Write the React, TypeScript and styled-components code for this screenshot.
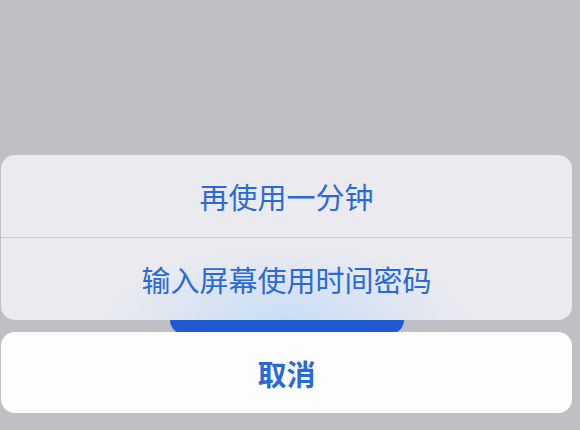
import React from "react";
import styled, { createGlobalStyle } from "styled-components";

//#region
const GlobalStyle = createGlobalStyle`
  html, body {
    margin: 0;
    padding: 0;
    background: #c0bfc4;
  }
  body {
    font-family: "Noto Sans CJK SC", "Noto Sans", sans-serif;
  }
`;

const Page = styled.div`
  position: relative;
  box-sizing: border-box;
  width: 580px;
  height: 430px;
  padding: 0 8px 17px 1px;
  display: flex;
  flex-direction: column;
  justify-content: flex-end;
  overflow: hidden;
`;

// the blue button of the screen under the sheet
const UnderButton = styled.div`
  position: absolute;
  left: 170px;
  top: 262px;
  width: 234px;
  height: 72px;
  border-radius: 14px;
  background: #1f5ad0;
`;

const Sheet = styled.div`
  position: relative;
  z-index: 1;
  display: flex;
  flex-direction: column;
  gap: 12px;
`;

const Group = styled.div`
  display: flex;
  flex-direction: column;
  border-radius: 14px;
  overflow: hidden;
  background:
    radial-gradient(ellipse 190px 75px at 50% 100%, rgba(198, 220, 246, 0.9), rgba(206, 224, 246, 0) 100%),
    #ebebef;
`;

const Action = styled.div<{ $divider?: boolean }>`
  height: 82px;
  display: flex;
  align-items: center;
  justify-content: center;
  font-size: 29px;
  color: #2a6ad6;
  border-bottom: ${(p) => (p.$divider ? "1px solid #c9c9ce" : "none")};
`;

const Cancel = styled.div`
  height: 81px;
  border-radius: 14px;
  background: #fdfdfe;
  display: flex;
  align-items: center;
  justify-content: center;
  font-size: 29px;
  font-weight: 600;
  color: #2a6ad6;
`;
//#endregion

const App = () => {
  return (
    <Page>
      <GlobalStyle />
      <UnderButton />

      <Sheet>
        <Group>
          <Action $divider>再使用一分钟</Action>
          <Action>输入屏幕使用时间密码</Action>
        </Group>

        <Cancel>取消</Cancel>
      </Sheet>
    </Page>
  );
};

export default App;
